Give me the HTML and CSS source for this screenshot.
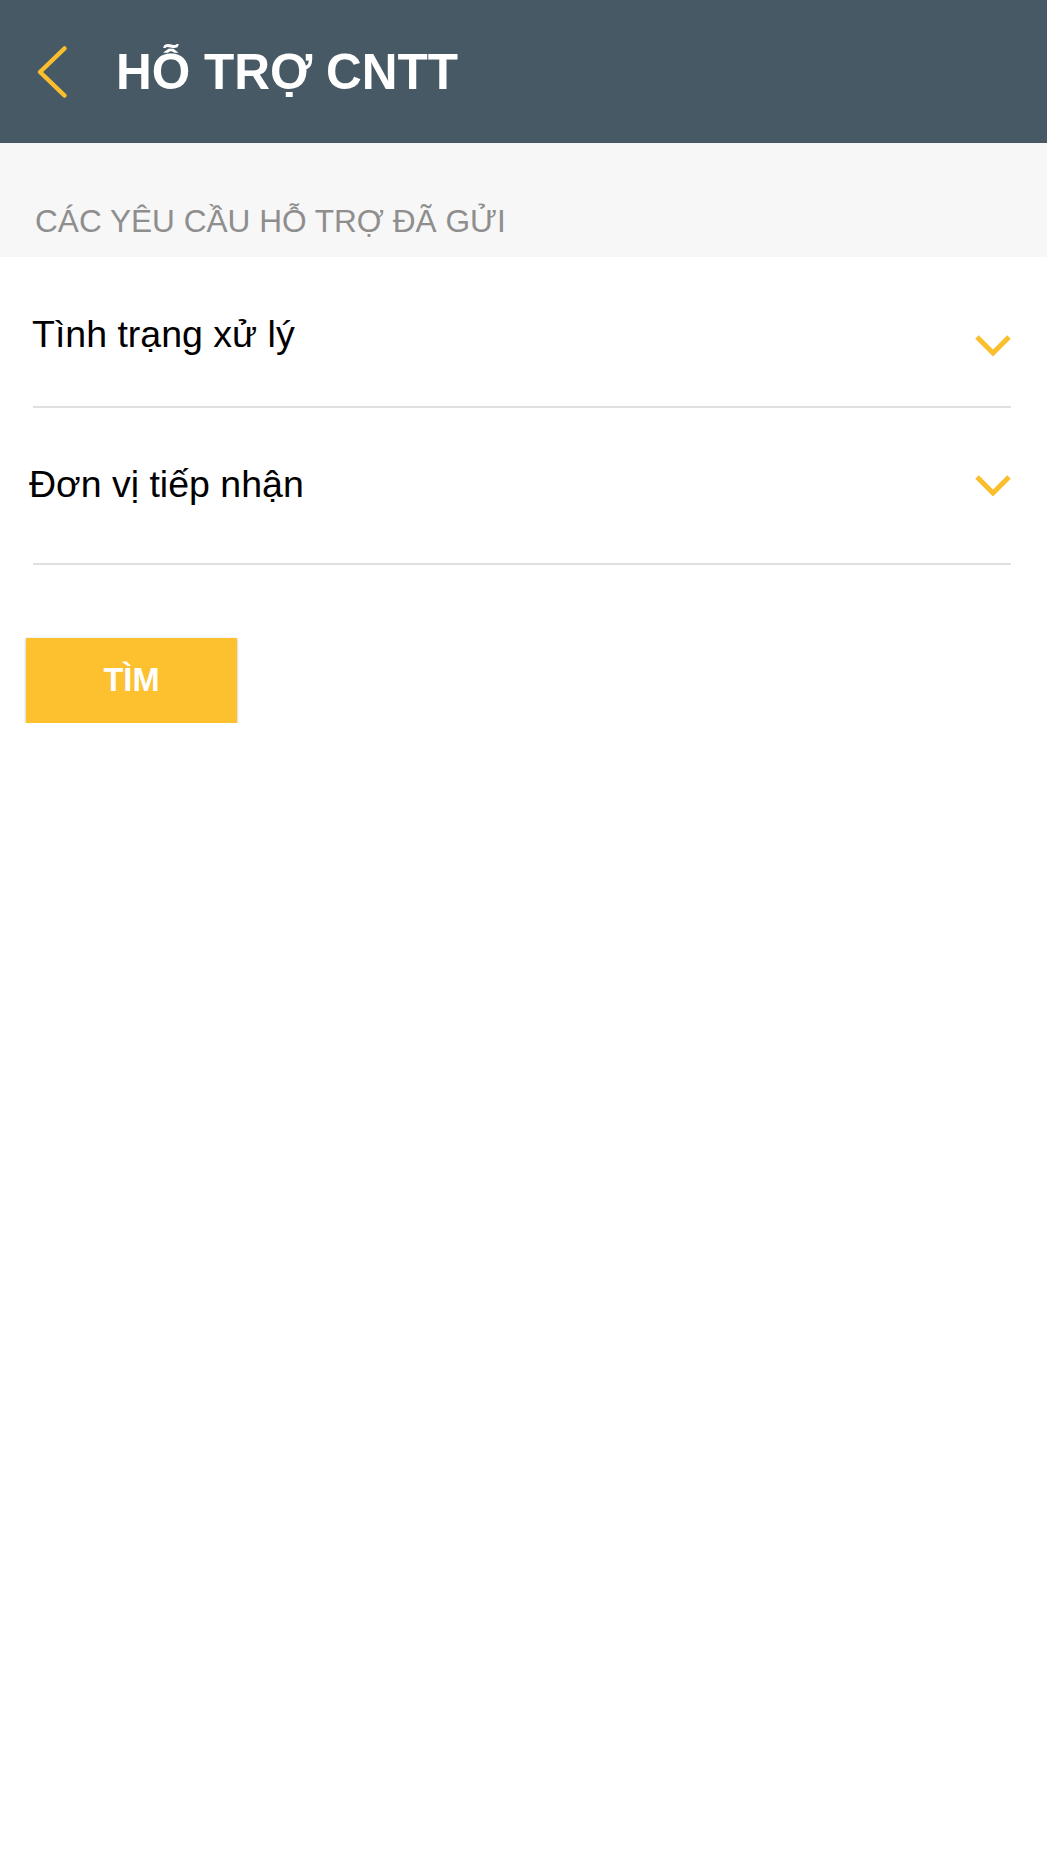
FILE: index.html
```html
<!DOCTYPE html>
<html lang="vi">
<head>
<meta charset="utf-8">
<title>HỖ TRỢ CNTT</title>
<link rel="stylesheet" href="styles.css">
</head>
<body>
<header class="topbar">
  <svg class="back" viewBox="0 0 32 54" width="32" height="54" aria-hidden="true">
    <polyline points="28.5,3.5 4,27 28.5,50.5" fill="none" stroke="#fbbf2d" stroke-width="4.5" stroke-linecap="round" stroke-linejoin="round"/>
  </svg>
  <h1 class="title">HỖ TRỢ CNTT</h1>
</header>
<section class="section-head">
  <span class="section-title">CÁC YÊU CẦU HỖ TRỢ ĐÃ GỬI</span>
</section>
<div class="form">
  <div class="field field-status">
    <span class="label">Tình trạng xử lý</span>
    <svg class="chev" viewBox="0 0 36 22" width="36" height="22" aria-hidden="true">
      <polyline points="2,2 18,18 34,2" fill="none" stroke="#fbbf2d" stroke-width="5"/>
    </svg>
  </div>
  <div class="field field-unit">
    <span class="label label-unit">Đơn vị tiếp nhận</span>
    <svg class="chev" viewBox="0 0 36 22" width="36" height="22" aria-hidden="true">
      <polyline points="2,2 18,18 34,2" fill="none" stroke="#fbbf2d" stroke-width="5"/>
    </svg>
  </div>
  <button class="btn" type="button">TÌM</button>
</div>
</body>
</html>
```
FILE: styles.css
```css
html, body {
  margin: 0;
  padding: 0;
  background: #ffffff;
}
body {
  font-family: "Liberation Sans", Arial, sans-serif;
  width: 1047px;
}
.topbar {
  height: 143px;
  background: #485966;
  display: flex;
  align-items: center;
  padding-left: 36px;
  box-sizing: border-box;
}
.back {
  display: block;
  flex: none;
}
.title {
  margin: 2px 0 0 48px;
  font-size: 49.5px;
  font-weight: 700;
  color: #ffffff;
  line-height: 1.15;
  letter-spacing: 0;
}
.section-head {
  background: #f7f7f7;
  height: 114px;
  box-sizing: border-box;
  padding: 60px 0 0 35px;
}
.section-title {
  display: block;
  font-size: 31.6px;
  line-height: 36px;
  color: #8e8e8e;
}
.form {
  display: flex;
  flex-direction: column;
}
.field {
  margin: 0 36px 0 33px;
  border-bottom: 2px solid #e0e0e0;
  display: flex;
  justify-content: space-between;
  align-items: flex-start;
  box-sizing: border-box;
}
.label {
  font-size: 37.5px;
  line-height: 44px;
  color: #000000;
  margin-left: -1px;
}
.chev {
  display: block;
  flex: none;
}
.field-status {
  height: 151px;
  padding-top: 55px;
}
.field-status .chev {
  margin-top: 23px;
}
.field-unit {
  height: 157px;
  padding-top: 54px;
}
.field-unit .chev {
  margin-top: 13px;
}
.label-unit {
  margin-left: -4px;
}
.btn {
  align-self: flex-start;
  margin: 73px 0 0 26px;
  width: 211px;
  height: 85px;
  border: 0;
  border-radius: 0;
  background: #fdc02f;
  color: #ffffff;
  font-family: "Liberation Sans", Arial, sans-serif;
  font-size: 32.5px;
  font-weight: 700;
  padding: 0;
  box-shadow: 0 1px 3px rgba(0, 0, 0, 0.28);
  cursor: pointer;
}
```
